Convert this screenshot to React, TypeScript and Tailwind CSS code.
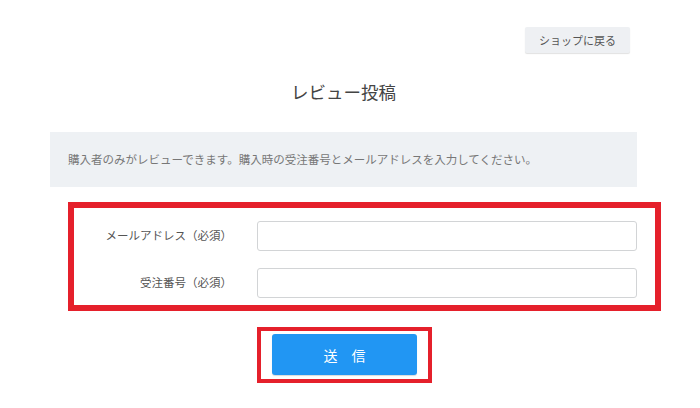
import React from "react"

const App: React.FC = () => {
  return (
    <div className="min-h-screen w-[700px] bg-white font-['Noto_Sans_CJK_JP','Noto_Sans',sans-serif] text-[#555]">
      <div className="flex justify-end pt-[27px] pr-[70px]">
        <button className="h-[26px] w-[105px] rounded-[2px] bg-[#eef0f3] text-[11px] leading-none text-[#555] shadow-[0_1px_1px_rgba(0,0,0,0.12)]">
          ショップに戻る
        </button>
      </div>

      <div className="ml-[50px] w-[587px]">
        <h1 className="mt-[27px] h-[24px] text-center text-[17.5px] font-normal leading-[24px] text-[#444]">
          レビュー投稿
        </h1>

        <div className="mt-[28px] flex h-[55px] items-center bg-[#eef1f4] pl-[18px]">
          <p className="text-[11.5px] leading-none text-[#777]">
            購入者のみがレビューできます。購入時の受注番号とメールアドレスを入力してください。
          </p>
        </div>
      </div>

      <div className="ml-[68px] mt-[15px] w-[593px] border-[6px] border-[#e5202b] pb-[7px] pr-[18px] pt-[13px]">
        <div className="flex flex-col gap-[17px]">
          <div className="flex items-center">
            <label className="w-[159px] pr-[1px] text-right text-[11.5px] text-[#555]">メールアドレス（必須）</label>
            <input
              type="text"
              className="ml-[24px] h-[30px] w-[380px] rounded-[3px] border border-[#d2d4d6] bg-white px-2 outline-none"
            />
          </div>
          <div className="flex items-center">
            <label className="w-[159px] pr-[1px] text-right text-[11.5px] text-[#555]">受注番号（必須）</label>
            <input
              type="text"
              className="ml-[24px] h-[30px] w-[380px] rounded-[3px] border border-[#d2d4d6] bg-white px-2 outline-none"
            />
          </div>
        </div>
      </div>

      <div className="ml-[257px] mt-[16px] h-[56px] w-[175px] border-[4px] border-[#e5202b] pl-[11px] pt-[3px]">
        <button className="h-[41px] w-[145px] rounded-[3px] bg-[#2196f3] text-[14px] leading-none text-white shadow-[0_1px_1px_rgba(0,0,0,0.15)]">
          送　信
        </button>
      </div>
    </div>
  )
}

export default App
